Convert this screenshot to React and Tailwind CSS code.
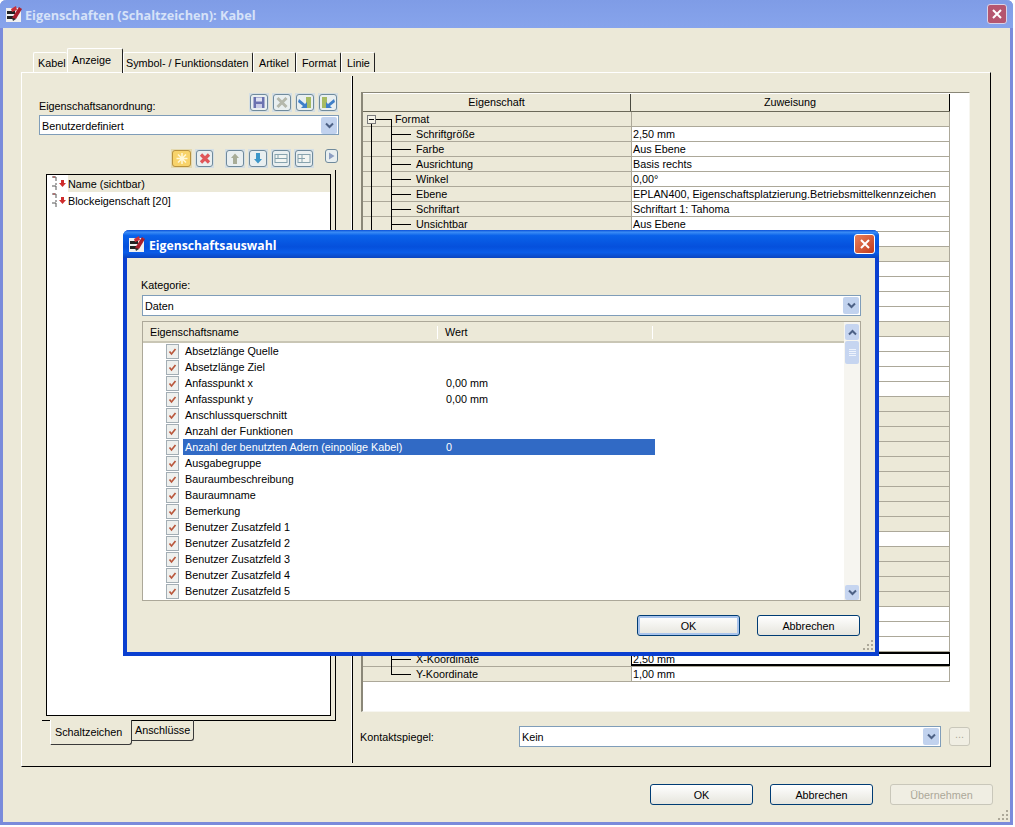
import React from "react";

const font = "font-['Liberation_Sans',Arial,sans-serif] text-[10.8px] leading-[13px] text-black";

const names = [
  "Absetzlänge Quelle",
  "Absetzlänge Ziel",
  "Anfasspunkt x",
  "Anfasspunkt y",
  "Anschlussquerschnitt",
  "Anzahl der Funktionen",
  "Anzahl der benutzten Adern (einpolige Kabel)",
  "Ausgabegruppe",
  "Bauraumbeschreibung",
  "Bauraumname",
  "Bemerkung",
  "Benutzer Zusatzfeld 1",
  "Benutzer Zusatzfeld 2",
  "Benutzer Zusatzfeld 3",
  "Benutzer Zusatzfeld 4",
  "Benutzer Zusatzfeld 5",
];

const values = { 2: "0,00 mm", 3: "0,00 mm", 6: "0" };

// one entry per table row: label, value, grey right cell
const top = [
  { label: "Format", group: true, grey: true },
  { label: "Schriftgröße", value: "2,50 mm" },
  { label: "Farbe", value: "Aus Ebene" },
  { label: "Ausrichtung", value: "Basis rechts" },
  { label: "Winkel", value: "0,00°" },
  { label: "Ebene", value: "EPLAN400, Eigenschaftsplatzierung.Betriebsmittelkennzeichen" },
  { label: "Schriftart", value: "Schriftart 1: Tahoma" },
  { label: "Unsichtbar", value: "Aus Ebene" },
];

const hiddenPattern = [0, 1, 0, 0, 0, 0, 1, 0, 0, 0, 0, 1, 1, 1, 1, 1, 1, 1, 1, 1, 0, 1, 1, 1, 1, 0, 0, 0];

const rows = [
  ...top,
  ...hiddenPattern.map((g) => ({ grey: g === 1, blank: true })),
  { label: "X-Koordinate", value: "2,50 mm", focus: true },
  { label: "Y-Koordinate", value: "1,00 mm", last: true },
];

function Chevron({ up }) {
  return (
    <svg width="11" height="9" viewBox="0 0 11 9" fill="none">
      <path d={up ? "M2 6.5 L5.5 3 L9 6.5" : "M2 2.5 L5.5 6 L9 2.5"} stroke="#4d6185" strokeWidth="2" />
    </svg>
  );
}

function Select({ value, className = "" }) {
  return (
    <div className={`flex items-center border border-[#7f9db9] bg-white pl-[2px] pr-px ${className}`}>
      <span className="flex-1 pt-[2px]">{value}</span>
      <span className="flex h-[17px] w-[16px] items-center justify-center rounded-[2px] bg-[#c1d2ee]">
        <Chevron />
      </span>
    </div>
  );
}

function Button({ children, primary, disabled }) {
  const look = disabled
    ? "border-[#c9c7ba] bg-[#f0eee3] text-[#aca899]"
    : primary
      ? "border-[#003c74] bg-gradient-to-b from-white to-[#e6e5dd] shadow-[inset_0_0_0_2px_#a9c4ec]"
      : "border-[#003c74] bg-gradient-to-b from-white to-[#e6e5dd]";
  return (
    <div className={`flex h-[21px] w-[103px] items-center justify-center rounded-[3px] border pt-px ${look}`}>{children}</div>
  );
}

function ToolBtn({ children, warm, className = "w-[20px]" }) {
  return (
    <div className={`h-[19px] p-px ${warm ? "bg-[#e4d9b0]" : "bg-[#d5dfe4]"} ${className}`}>
      <div
        className={`flex h-full items-center justify-center rounded-[3px] border ${
          warm ? "border-[#b9923e] bg-[#f8d36a]" : "border-[#6f8a9c] bg-[#e9eff0]"
        }`}
      >
        {children}
      </div>
    </div>
  );
}

function Ico({ children }) {
  return (
    <svg width="14" height="13" viewBox="0 0 14 13" fill="none">
      {children}
    </svg>
  );
}

function AppIcon() {
  return (
    <svg width="17" height="16" viewBox="0 0 17 16" className="shrink-0">
      <rect x="0" y="2" width="15" height="14" fill="#f0f0f0" />
      <rect x="1" y="5" width="8" height="3" fill="#222" />
      <rect x="1" y="10" width="8" height="3" fill="#222" />
      <path d="M6 12 L13 1 L16 3 L10 13 Z" fill="#a81e2c" />
      <path d="M6 12 L7 15 L10 13 Z" fill="#333" />
      <path d="M5 3 L10 0 L11 4 L6 6 Z" fill="#c8303a" />
    </svg>
  );
}

function CloseX({ size = 10 }) {
  return (
    <svg width={size} height={size} viewBox="0 0 10 10">
      <path d="M1 1 L9 9 M9 1 L1 9" stroke="white" strokeWidth="2" />
    </svg>
  );
}

function Check() {
  return (
    <svg width="13" height="15" viewBox="0 0 13 15" className="shrink-0">
      <rect x="0.5" y="0.5" width="12" height="14" fill="#eef0ee" stroke="#a3aeb5" />
      <path d="M3.5 7.5 L5.5 10 L9.5 5" fill="none" stroke="#b9573c" strokeWidth="1.7" />
    </svg>
  );
}

function Grip({ className }) {
  return (
    <svg width="12" height="12" viewBox="0 0 12 12" className={className}>
      {[[9, 1], [5, 5], [9, 5], [1, 9], [5, 9], [9, 9]].map(([x, y]) => (
        <rect key={`${x}-${y}`} x={x} y={y} width="2" height="2" fill="#aca899" />
      ))}
    </svg>
  );
}

function Tree({ row }) {
  if (row.blank) return null;
  if (row.group) {
    return (
      <>
        <span className="absolute left-[8px] top-[12px] h-[3px] w-px bg-black" />
        <span className="absolute left-[12px] top-[7px] h-px w-[16px] bg-black" />
        <span className="absolute left-[28px] top-[7px] h-[8px] w-px bg-black" />
        <span className="absolute left-[4px] top-[3px] flex h-[9px] w-[9px] items-center justify-center border border-[#7b7b7b] bg-[#f3f1e6]">
          <span className="h-px w-[5px] bg-black" />
        </span>
      </>
    );
  }
  return (
    <>
      {!row.focus && !row.last && <span className="absolute left-[8px] top-0 h-[15px] w-px bg-black" />}
      <span className={`absolute left-[28px] top-0 w-px bg-black ${row.last ? "h-[8px]" : "h-[15px]"}`} />
      <span className="absolute left-[28px] top-[7px] h-px w-[20px] bg-black" />
    </>
  );
}

function PropRow({ row }) {
  return (
    <div className="flex h-[15px] w-[587px] border-b border-[#aca899] leading-[14px]">
      <div className="relative h-full w-[268px] shrink-0 bg-[#ece9d8]">
        <Tree row={row} />
        {row.label && <span className={`absolute top-0 ${row.group ? "left-[32px]" : "left-[53px]"}`}>{row.label}</span>}
      </div>
      <div
        className={`h-full flex-1 overflow-hidden whitespace-nowrap border-x border-[#aca899] pl-[1px] ${row.grey ? "bg-[#ece9d8]" : "bg-white"} ${
          row.focus ? "border-2 border-black" : ""
        }`}
      >
        <span className={row.focus ? "relative -top-[2px]" : ""}>{row.value}</span>
      </div>
    </div>
  );
}

function PropertyDialog() {
  return (
    <div className="absolute left-[123px] top-[230px] flex h-[426px] w-[756px] flex-col rounded-t-[6px] border-x-[4px] border-b-[4px] border-[#0a3fd0] bg-[#ece9d8]">
      <div className="-mx-[4px] flex h-[28px] shrink-0 items-center gap-[3px] rounded-t-[6px] bg-[linear-gradient(to_bottom,#0a4fd8,#3a8cf5_8%,#0a62ea_20%,#0550dc_60%,#0a5ce8_80%,#0a44c0)] pl-[6px] pr-[4px]">
        <AppIcon />
        <span className="pt-[2px] font-['Open_Sans',sans-serif] text-[12.2px] font-bold text-white">Eigenschaftsauswahl</span>
        <span className="ml-auto flex h-[20px] w-[21px] items-center justify-center rounded-[3px] border border-white bg-gradient-to-br from-[#e9805a] to-[#c0391c]">
          <CloseX />
        </span>
      </div>
      <div className="relative flex-1 px-[15px] pt-[21px]">
        <div className="-ml-px">Kategorie:</div>
        <Select value="Daten" className="mt-[3px] h-[21px] w-[719px]" />
        <div className="mt-[5px] flex h-[280px] w-[719px] border border-[#aca899] bg-white">
          <div className="flex min-w-0 flex-1 flex-col">
            <div className="flex h-[21px] shrink-0 items-center border-b-2 border-[#c9c6b5] bg-[#ece9d8] pt-px">
              <span className="w-[295px] border-r border-white pl-[7px]">Eigenschaftsname</span>
              <span className="w-[215px] border-r border-white pl-[7px]">Wert</span>
            </div>
            <div className="flex-1 overflow-hidden">
              {names.map((n, i) => (
                <div key={n} className="flex h-[16px] items-center pl-[23px] pr-0">
                  <Check />
                  <div
                    className={`ml-[4px] flex h-full w-[472px] items-center pl-[2px] ${i === 6 ? "bg-[#316ac5] text-white" : ""}`}
                  >
                    <span className="w-[261px] shrink-0 whitespace-nowrap">{n}</span>
                    <span>{values[i]}</span>
                  </div>
                </div>
              ))}
            </div>
          </div>
          <div className="flex w-[16px] shrink-0 flex-col items-center bg-[#f6f5f0] pt-[2px]">
            <span className="flex h-[16px] w-[14px] items-center justify-center rounded-[2px] bg-[#c6d5f0]">
              <Chevron up />
            </span>
            <span className="mt-px flex h-[23px] w-[14px] flex-col items-center justify-center gap-px rounded-[2px] bg-[#c6d5f0]">
              <span className="h-px w-[7px] bg-[#eef3fc]" />
              <span className="h-px w-[7px] bg-[#eef3fc]" />
              <span className="h-px w-[7px] bg-[#eef3fc]" />
              <span className="h-px w-[7px] bg-[#eef3fc]" />
            </span>
            <span className="flex-1" />
            <span className="flex h-[15px] w-[14px] items-center justify-center rounded-[2px] bg-[#c6d5f0]">
              <Chevron />
            </span>
          </div>
        </div>
        <div className="mt-[14px] flex w-[718px] justify-end gap-[17px]">
          <Button primary>OK</Button>
          <Button>Abbrechen</Button>
        </div>
        <Grip className="absolute bottom-px right-px" />
      </div>
    </div>
  );
}

function LeftPane() {
  return (
    <div className="flex w-[330px] shrink-0 flex-col border-r border-white pl-[17px] pt-[17px]">
      <div className="flex w-[299px] items-end justify-between">
        <span className="relative top-px">Eigenschaftsanordnung:</span>
        <div className="flex gap-[3px]">
          <ToolBtn>
            <Ico>
              <rect x="1.5" y="1" width="11" height="11" fill="#6a72b0" />
              <rect x="4" y="1.5" width="6" height="4" fill="#dfe2f2" />
              <rect x="4" y="8" width="6" height="4" fill="#c9cce6" />
            </Ico>
          </ToolBtn>
          <ToolBtn>
            <Ico>
              <path d="M2.5 2 L11.5 11 M11.5 2 L2.5 11" stroke="#b5b8ac" strokeWidth="3" />
            </Ico>
          </ToolBtn>
          <ToolBtn>
            <Ico>
              <rect x="8" y="1" width="5" height="11" fill="#a7bb62" />
              <path d="M1 3 L7 8 L9 6 L9 12 L3 12 L5 10 L0 6 Z" fill="#3f7fc8" />
            </Ico>
          </ToolBtn>
          <ToolBtn>
            <Ico>
              <rect x="1" y="1" width="5" height="11" fill="#a7bb62" />
              <path d="M13 3 L7 8 L5 6 L5 12 L11 12 L9 10 L14 6 Z" fill="#3f7fc8" />
            </Ico>
          </ToolBtn>
        </div>
      </div>
      <Select value="Benutzerdefiniert" className="mt-[3px] h-[20px] w-[300px]" />
      <div className="mt-[14px] flex w-[300px] items-start pl-[132px]">
        <ToolBtn warm className="w-[21px]">
          <Ico>
            <path
              d="M7 1 V12 M1.5 6.5 H12.5 M3 2.5 L11 10.5 M11 2.5 L3 10.5"
              stroke="#fff8d8"
              strokeWidth="1.5"
            />
          </Ico>
        </ToolBtn>
        <ToolBtn className="ml-[3px] w-[19px]">
          <Ico>
            <path d="M3 2.5 L11 10.5 M11 2.5 L3 10.5" stroke="#e0565a" strokeWidth="3.2" />
          </Ico>
        </ToolBtn>
        <ToolBtn className="ml-[11px] w-[20px]">
          <Ico>
            <path d="M7 1.5 L11 6 H9 V12 H5 V6 H3 Z" fill="#a8ad98" />
          </Ico>
        </ToolBtn>
        <ToolBtn className="ml-[3px] w-[20px]">
          <Ico>
            <path d="M7 11.5 L11 7 H9 V1 H5 V7 H3 Z" fill="#3c97c9" />
          </Ico>
        </ToolBtn>
        <ToolBtn className="ml-[3px] w-[20px]">
          <Ico>
            <rect x="1" y="2.5" width="12" height="8" fill="#f2f5f2" stroke="#87a3ae" />
            <path d="M1 6.5 H13 M4 2.5 V6.5" stroke="#87a3ae" />
          </Ico>
        </ToolBtn>
        <ToolBtn className="ml-[3px] w-[20px]">
          <Ico>
            <rect x="1" y="2.5" width="12" height="8" fill="#f2f5f2" stroke="#87a3ae" />
            <path d="M1 6.5 H8 M5 2.5 V10.5" stroke="#87a3ae" />
          </Ico>
        </ToolBtn>
        <div className="ml-[11px] flex h-[14px] w-[13px] items-center justify-center rounded-[3px] border border-[#6f8a9c] bg-[#e9eff0]">
          <svg width="7" height="8" viewBox="0 0 7 8">
            <path d="M1 0.5 L6.5 4 L1 7.5 Z" fill="#8d9fc2" />
          </svg>
        </div>
      </div>
      <div className="ml-[3px] mt-[2px] h-[551px] w-[294px] border-b border-r border-black pl-[4px] pt-[4px]">
        <div className="h-[542px] w-[285px] border border-black bg-white">
          {["Name (sichtbar)", "Blockeigenschaft [20]"].map((t, i) => (
            <div key={t} className="flex h-[17px] items-center">
              <svg width="21" height="17" viewBox="0 0 21 17" className="shrink-0">
                <path d="M5 2 H9 V6 M5 11 H9 V15 M9 8 V10" stroke="#555" fill="none" />
                <path d="M6 2 H8" stroke="#b04040" />
                <path d="M14 5 H17 V8 H19 L15.5 12 L12 8 H14 Z" fill="#cf2c2c" />
              </svg>
              <span className={`flex h-full flex-1 items-center pt-px ${i === 0 ? "bg-[#ece9d8]" : ""}`}>{t}</span>
            </div>
          ))}
        </div>
      </div>
      <div className="-mt-px ml-[11px] flex items-start">
        <div className="flex h-[25px] w-[82px] items-center rounded-br-[3px] border-b border-l border-r border-[#3a3a3a] border-l-white bg-[#ece9d8] pl-[4px]">
          Schaltzeichen
        </div>
        <div className="flex h-[21px] w-[62px] items-center rounded-br-[3px] border-b border-r border-[#3a3a3a] pl-[3px]">
          Anschlüsse
        </div>
      </div>
    </div>
  );
}

function RightPane() {
  return (
    <div className="flex min-w-0 flex-1 flex-col border-l border-black pl-[7px] pr-[20px] pt-[16px]">
      <div className="ml-px h-[620px] overflow-hidden border-b border-l-2 border-r border-t border-[#8a8778] border-b-[#f7f6f0] border-r-[#f7f6f0] bg-white pt-px">
        <div className="flex h-[18px] w-[587px] border-b border-[#6b6959] bg-[#ece9d8] pt-[2px] text-center">
          <div className="-mt-[2px] w-[268px] border-r border-[#4a4a40] pt-[2px]">Eigenschaft</div>
          <div className="-mt-[2px] flex-1 border-r border-black pt-[2px]">Zuweisung</div>
        </div>
        {rows.map((row, i) => (
          <PropRow key={i} row={row} />
        ))}
      </div>
      <div className="mt-[14px] flex h-[21px] items-center">
        <span className="w-[159px] shrink-0 pt-[2px]">Kontaktspiegel:</span>
        <Select value="Kein" className="h-[21px] w-[422px]" />
        <div className="ml-[8px] flex h-[19px] w-[21px] items-start justify-center rounded-[3px] border border-[#c9c7ba] bg-[#f0eee3] text-[#aca899]">
          ...
        </div>
      </div>
    </div>
  );
}

export default function App() {
  const tabs = [
    ["Kabel", "w-[34px] pl-[4px]"],
    ["Anzeige", "w-[56px] pl-[4px]"],
    ["Symbol- / Funktionsdaten", "w-[130px] pl-[2px]"],
    ["Artikel", "w-[43px] pl-[5px]"],
    ["Format", "w-[45px] pl-[5px]"],
    ["Linie", "w-[34px] pl-[5px]"],
  ];

  return (
    <div className={`relative h-[827px] w-[1015px] overflow-hidden bg-white ${font}`}>
      <div className="flex h-[825px] w-[1013px] flex-col rounded-t-[6px] border-x-[3px] border-b-[3px] border-[#7a8bdb] bg-[#ece9d8]">
        <div className="-mx-[3px] flex h-[28px] shrink-0 items-center gap-[2px] rounded-t-[6px] bg-gradient-to-b from-[#7f9ce6] to-[#87a4ec] pl-[6px] pr-[6px]">
          <AppIcon />
          <span className="pt-[2px] font-['Open_Sans',sans-serif] text-[12.7px] font-bold text-[#d6e2f8]">
            Eigenschaften (Schaltzeichen): Kabel
          </span>
          <span className="ml-auto flex h-[20px] w-[20px] items-center justify-center rounded-[3px] border border-[#d8d4e8] bg-[#b5566f]">
            <CloseX />
          </span>
        </div>

        <div className="mt-[20px] flex h-[24px] items-end pl-[30px]">
          {tabs.map(([t, w]) => {
            const active = t === "Anzeige";
            return (
              <div
                key={t}
                className={`${w} whitespace-nowrap rounded-t-[2px] border-l border-t border-white ${
                  active ? "relative -mb-px h-[25px] pt-[5px]" : "h-[20px] pt-[4px]"
                } ${t === "Kabel" ? "" : "border-r border-r-[#222]"}`}
              >
                {t}
              </div>
            );
          })}
        </div>

        <div className="ml-[18px] flex h-[695px] w-[970px] border border-b-black border-l-white border-r-black border-t-white py-[3px]">
          <LeftPane />
          <RightPane />
        </div>

        <div className="relative flex flex-1 justify-end gap-[17px] pr-[17px] pt-[17px]">
          <Button>OK</Button>
          <Button>Abbrechen</Button>
          <Button disabled>Übernehmen</Button>
          <Grip className="absolute bottom-px right-px" />
        </div>
      </div>

      <PropertyDialog />
    </div>
  );
}
